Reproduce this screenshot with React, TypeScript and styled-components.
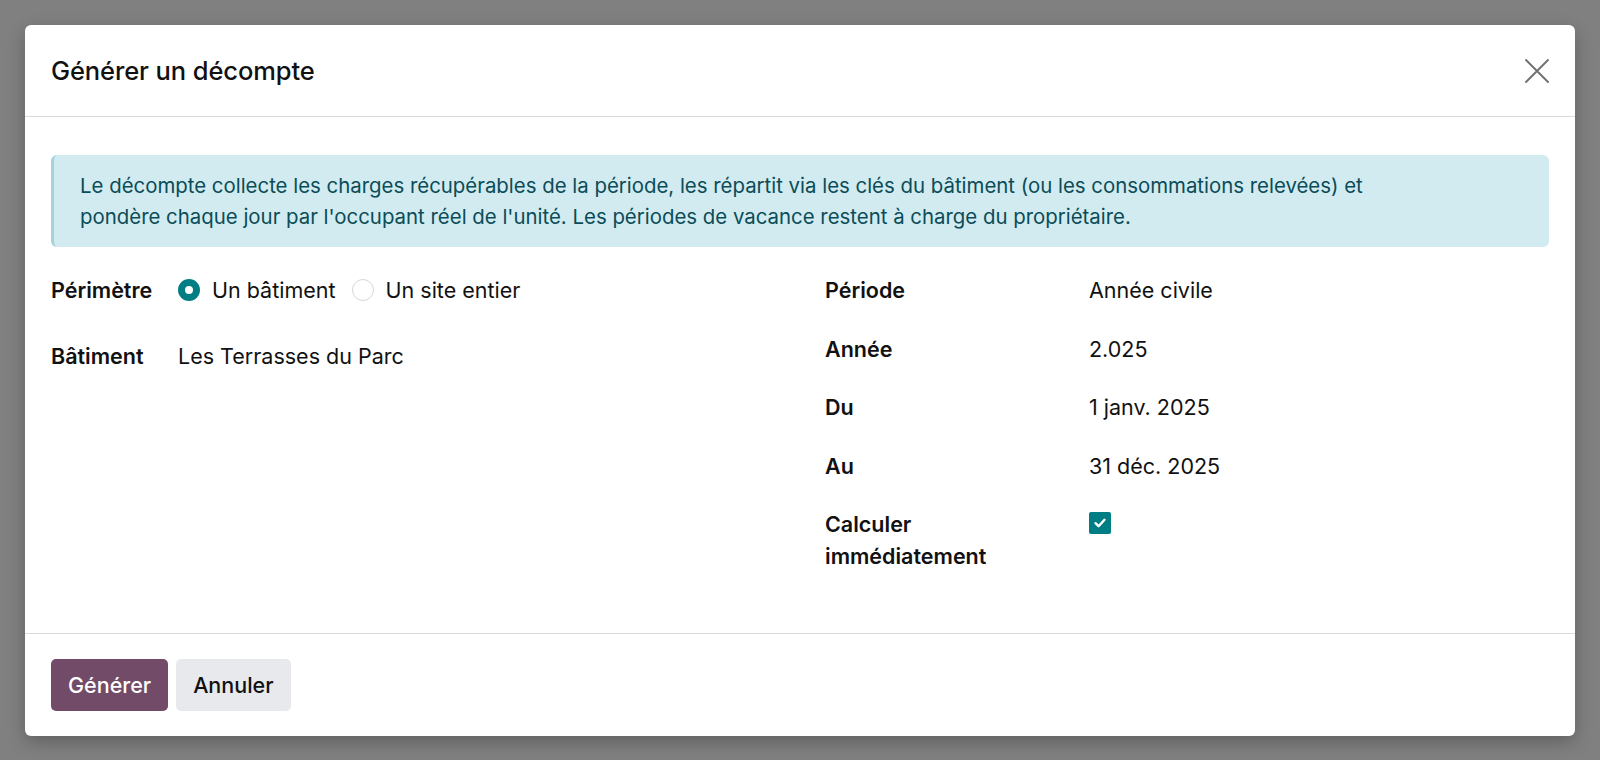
import styled, { createGlobalStyle } from 'styled-components';

const GlobalStyle = createGlobalStyle`
  html, body {
    margin: 0;
    padding: 0;
    background: #808080;
  }
  body {
    font-family: Inter, "Noto Sans", "Liberation Sans", sans-serif;
    color: #111111;
    font-size: 21.5px;
  }
`;

const Backdrop = styled.div`
  width: 1600px;
  height: 760px;
  box-sizing: border-box;
  padding: 25px;
`;

const Dialog = styled.div`
  background: #ffffff;
  border-radius: 6px;
  box-shadow: 0 6px 18px rgba(0, 0, 0, 0.25);
  display: flex;
  flex-direction: column;
  overflow: hidden;
`;

const Header = styled.header`
  height: 92px;
  box-sizing: border-box;
  padding: 0 22px 0 26px;
  display: flex;
  align-items: center;
  justify-content: space-between;
  border-bottom: 1px solid #d8dadd;
`;

const Title = styled.h4`
  margin: 0;
  font-size: 25.5px;
  font-weight: 500;
  letter-spacing: -0.1px;
  color: #111111;
`;

const CloseButton = styled.button`
  width: 32px;
  height: 32px;
  border: none;
  background: transparent;
  padding: 0;
  display: flex;
  align-items: center;
  justify-content: center;
  cursor: pointer;
`;

const Body = styled.main`
  padding: 38px 26px 61px;
  display: flex;
  flex-direction: column;
`;

const Alert = styled.div`
  background: #d1ebf0;
  border-left: 3px solid #a3d4de;
  border-radius: 6px;
  color: #0b4c58;
  font-size: 20.4px;
  padding: 15px 26px;
  line-height: 31px;
`;

const Form = styled.div`
  margin-top: 27px;
  display: grid;
  grid-template-columns: 1fr 1fr;
  column-gap: 50px;
  align-items: start;
`;

const Group = styled.div<{ $labelWidth: number }>`
  display: grid;
  grid-template-columns: ${({ $labelWidth }) => $labelWidth}px 1fr;
  align-items: start;
`;

const Label = styled.div<{ $gap: number }>`
  font-weight: 600;
  line-height: 32px;
  padding-bottom: ${({ $gap }) => $gap}px;
`;

const Value = styled.div<{ $gap: number }>`
  line-height: 32px;
  min-height: 32px;
  padding-bottom: ${({ $gap }) => $gap}px;
  display: flex;
  align-items: center;
`;

const RadioGroup = styled.div`
  display: flex;
  align-items: center;
  gap: 16px;
`;

const RadioOption = styled.label`
  display: flex;
  align-items: center;
  gap: 12px;
`;

const RadioDot = styled.span<{ $checked?: boolean }>`
  width: 22px;
  height: 22px;
  box-sizing: border-box;
  border-radius: 50%;
  border: ${({ $checked }) => ($checked ? '7px solid #017e84' : '1px solid #d5d8dc')};
  background: #ffffff;
`;

const CheckBox = styled.span`
  width: 22px;
  height: 22px;
  margin-top: -2px;
  border-radius: 2px;
  background: #017e84;
  display: flex;
  align-items: center;
  justify-content: center;
`;

const Footer = styled.footer`
  border-top: 1px solid #d8dadd;
  padding: 25px 26px 25px;
  display: flex;
  gap: 8px;
`;

const Button = styled.button<{ $primary?: boolean }>`
  height: 52px;
  padding: 0 17px;
  border: none;
  border-radius: 5px;
  font-family: inherit;
  font-size: 21.5px;
  font-weight: 500;
  color: ${({ $primary }) => ($primary ? '#ffffff' : '#111111')};
  background: ${({ $primary }) => ($primary ? '#714b67' : '#e7e9ed')};
  cursor: pointer;
`;

const rightRows = [
  { label: 'Période', value: 'Année civile' },
  { label: 'Année', value: '2.025' },
  { label: 'Du', value: '1 janv. 2025' },
  { label: 'Au', value: '31 déc. 2025' },
];

const App = () => {
  return (
    <>
      <GlobalStyle />
      <Backdrop>
        <Dialog>
          <Header>
            <Title>Générer un décompte</Title>
            <CloseButton aria-label="Fermer">
              <svg width="26" height="26" viewBox="0 0 26 26">
                <path d="M2 2 L24 24 M24 2 L2 24" stroke="#707070" strokeWidth="1.9" strokeLinecap="round" />
              </svg>
            </CloseButton>
          </Header>

          <Body>
            <Alert>
              Le décompte collecte les charges récupérables de la période, les répartit via les clés du
              bâtiment (ou les consommations relevées) et
              <br />
              pondère chaque jour par l'occupant réel de l'unité. Les périodes de vacance restent à
              charge du propriétaire.
            </Alert>

            <Form>
              <Group $labelWidth={127}>
                <Label $gap={34}>Périmètre</Label>
                <Value $gap={34}>
                  <RadioGroup>
                    <RadioOption>
                      <RadioDot $checked />
                      Un bâtiment
                    </RadioOption>
                    <RadioOption>
                      <RadioDot />
                      Un site entier
                    </RadioOption>
                  </RadioGroup>
                </Value>
                <Label $gap={0}>Bâtiment</Label>
                <Value $gap={0}>Les Terrasses du Parc</Value>
              </Group>

              <Group $labelWidth={264}>
                {rightRows.map((row) => [
                  <Label key={row.label} $gap={26.5}>
                    {row.label}
                  </Label>,
                  <Value key={row.label + '-v'} $gap={26.5}>
                    {row.value}
                  </Value>,
                ])}
                <Label $gap={0}>
                  Calculer
                  <br />
                  immédiatement
                </Label>
                <Value $gap={0}>
                  <CheckBox>
                    <svg width="14" height="14" viewBox="0 0 14 14">
                      <path d="M2.5 7.2 L5.6 10.2 L11.5 3.8" stroke="#ffffff" strokeWidth="2.4" fill="none" strokeLinecap="round" strokeLinejoin="round" />
                    </svg>
                  </CheckBox>
                </Value>
              </Group>
            </Form>
          </Body>

          <Footer>
            <Button $primary>Générer</Button>
            <Button>Annuler</Button>
          </Footer>
        </Dialog>
      </Backdrop>
    </>
  );
};

export default App;
